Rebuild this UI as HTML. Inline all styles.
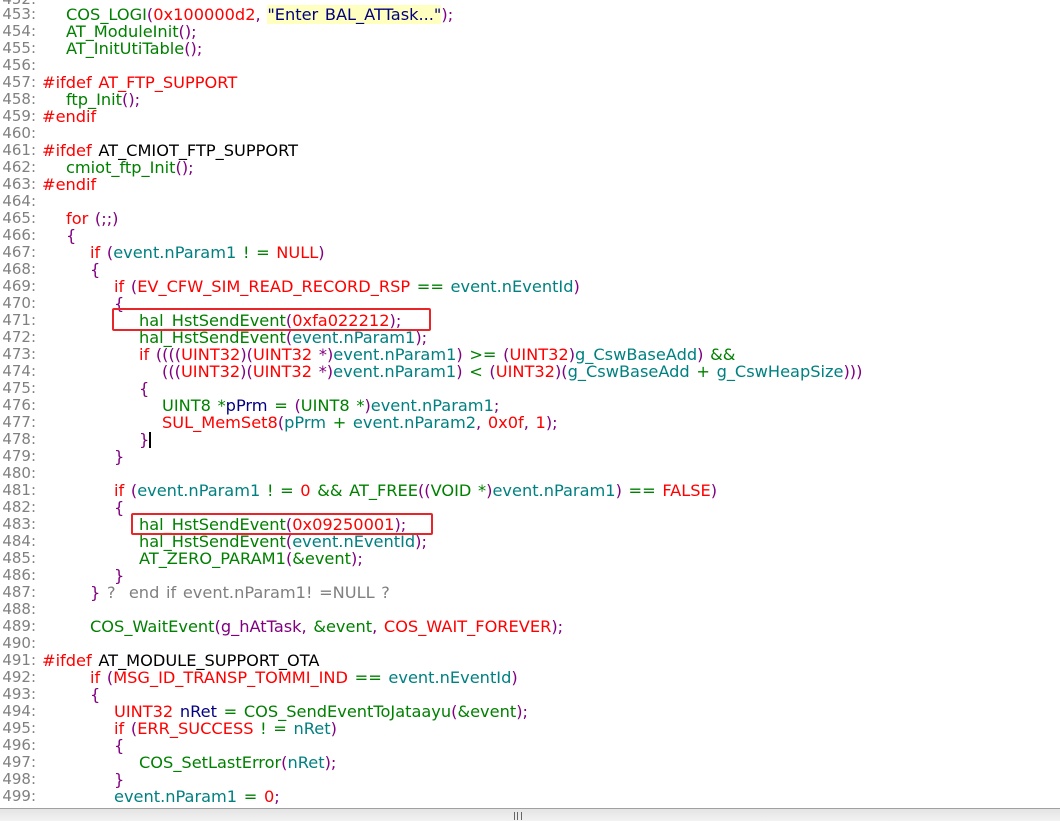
<!DOCTYPE html>
<html><head><meta charset="utf-8"><style>
html,body{margin:0;padding:0;background:#fff;width:1060px;height:820px;overflow:hidden}
.l{position:absolute;left:0;height:17px;line-height:17px;font-family:"DejaVu Sans","Liberation Sans",sans-serif;font-size:16.2px;white-space:pre;color:#008000}
.n{position:absolute;left:0;width:36px;text-align:right;color:#808080;font-size:15px}
.c{position:absolute;left:42px;word-spacing:1.5px}
.g{color:#008000}.r{color:#f00}.p{color:#800080}.t{color:#008080}.b{color:#000080}.s{color:#000080;background:#ffffc0}.x{color:#808080}
.box{position:absolute;border:2px solid #e8262a;border-radius:2px}
</style></head><body>
<div class="l" style="top:-9px"><span class="n">452:</span></div>
<div class="l" style="top:6px"><span class="n">453:</span><span class="c" style="left:66px">COS_LOGI<span class="p">(</span><span class="r">0x100000d2</span><span class="p">,</span> <span class="s">"Enter BAL_ATTask..."</span><span class="p">);</span></span></div>
<div class="l" style="top:23px"><span class="n">454:</span><span class="c" style="left:66px">AT_ModuleInit<span class="p">();</span></span></div>
<div class="l" style="top:40px"><span class="n">455:</span><span class="c" style="left:66px">AT_InitUtiTable<span class="p">();</span></span></div>
<div class="l" style="top:57px"><span class="n">456:</span></div>
<div class="l" style="top:74px"><span class="n">457:</span><span class="c"><span class="r">#ifdef AT_FTP_SUPPORT</span></span></div>
<div class="l" style="top:91px"><span class="n">458:</span><span class="c" style="left:66px">ftp_Init<span class="p">();</span></span></div>
<div class="l" style="top:108px"><span class="n">459:</span><span class="c"><span class="r">#endif</span></span></div>
<div class="l" style="top:125px"><span class="n">460:</span></div>
<div class="l" style="top:142px"><span class="n">461:</span><span class="c"><span class="r">#ifdef</span> <span style="color:#000">AT_CMIOT_FTP_SUPPORT</span></span></div>
<div class="l" style="top:159px"><span class="n">462:</span><span class="c" style="left:66px">cmiot_ftp_Init<span class="p">();</span></span></div>
<div class="l" style="top:176px"><span class="n">463:</span><span class="c"><span class="r">#endif</span></span></div>
<div class="l" style="top:193px"><span class="n">464:</span></div>
<div class="l" style="top:210px"><span class="n">465:</span><span class="c" style="left:66px"><span class="r">for</span> <span class="p">(;;)</span></span></div>
<div class="l" style="top:227px"><span class="n">466:</span><span class="c" style="left:66px"><span class="p">{</span></span></div>
<div class="l" style="top:244px"><span class="n">467:</span><span class="c" style="left:90px"><span class="r">if</span> <span class="p">(</span><span class="t">event.nParam1</span> ! = <span class="r">NULL</span><span class="p">)</span></span></div>
<div class="l" style="top:261px"><span class="n">468:</span><span class="c" style="left:90px"><span class="p">{</span></span></div>
<div class="l" style="top:278px"><span class="n">469:</span><span class="c" style="left:114px"><span class="r">if</span> <span class="p">(</span><span class="r">EV_CFW_SIM_READ_RECORD_RSP</span> == <span class="t">event.nEventId</span><span class="p">)</span></span></div>
<div class="l" style="top:295px"><span class="n">470:</span><span class="c" style="left:114px"><span class="p">{</span></span></div>
<div class="l" style="top:312px"><span class="n">471:</span><span class="c" style="left:139px">hal_HstSendEvent<span class="p">(</span><span class="r">0xfa022212</span><span class="p">);</span></span></div>
<div class="l" style="top:329px"><span class="n">472:</span><span class="c" style="left:139px">hal_HstSendEvent<span class="p">(</span><span class="t">event.nParam1</span><span class="p">);</span></span></div>
<div class="l" style="top:346px"><span class="n">473:</span><span class="c" style="left:139px"><span class="r">if</span> <span class="p">((((</span><span class="r">UINT32</span><span class="p">)(</span><span class="r">UINT32</span> <span class="p">*)</span><span class="t">event.nParam1</span><span class="p">)</span> &gt;= <span class="p">(</span><span class="r">UINT32</span><span class="p">)</span><span class="t">g_CswBaseAdd</span><span class="p">)</span> &amp;&amp;</span></div>
<div class="l" style="top:363px"><span class="n">474:</span><span class="c" style="left:162px"><span class="p">(((</span><span class="r">UINT32</span><span class="p">)(</span><span class="r">UINT32</span> <span class="p">*)</span><span class="t">event.nParam1</span><span class="p">)</span> &lt; <span class="p">(</span><span class="r">UINT32</span><span class="p">)(</span><span class="t">g_CswBaseAdd</span> + <span class="t">g_CswHeapSize</span><span class="p">)))</span></span></div>
<div class="l" style="top:380px"><span class="n">475:</span><span class="c" style="left:139px"><span class="p">{</span></span></div>
<div class="l" style="top:397px"><span class="n">476:</span><span class="c" style="left:162px">UINT8 *<span class="b">pPrm</span> = <span class="p">(</span>UINT8 *<span class="p">)</span><span class="t">event.nParam1</span><span class="p">;</span></span></div>
<div class="l" style="top:414px"><span class="n">477:</span><span class="c" style="left:162px"><span class="r">SUL_MemSet8</span><span class="p">(</span><span class="t">pPrm</span> + <span class="t">event.nParam2</span><span class="p">,</span> <span class="r">0x0f</span><span class="p">,</span> <span class="r">1</span><span class="p">);</span></span></div>
<div class="l" style="top:431px"><span class="n">478:</span><span class="c" style="left:139px"><span class="p">}</span><span style="display:inline-block;width:2px;height:16px;background:#000;vertical-align:-3px"></span></span></div>
<div class="l" style="top:448px"><span class="n">479:</span><span class="c" style="left:114px"><span class="p">}</span></span></div>
<div class="l" style="top:465px"><span class="n">480:</span></div>
<div class="l" style="top:482px"><span class="n">481:</span><span class="c" style="left:114px"><span class="r">if</span> <span class="p">(</span><span class="t">event.nParam1</span> ! = <span class="r">0</span> &amp;&amp; AT_FREE<span class="p">((</span>VOID *<span class="p">)</span><span class="t">event.nParam1</span><span class="p">)</span> == <span class="r">FALSE</span><span class="p">)</span></span></div>
<div class="l" style="top:499px"><span class="n">482:</span><span class="c" style="left:114px"><span class="p">{</span></span></div>
<div class="l" style="top:516px"><span class="n">483:</span><span class="c" style="left:139px">hal_HstSendEvent<span class="p">(</span><span class="r">0x09250001</span><span class="p">);</span></span></div>
<div class="l" style="top:533px"><span class="n">484:</span><span class="c" style="left:139px">hal_HstSendEvent<span class="p">(</span><span class="t">event.nEventId</span><span class="p">);</span></span></div>
<div class="l" style="top:550px"><span class="n">485:</span><span class="c" style="left:139px">AT_ZERO_PARAM1<span class="p">(</span>&amp;event<span class="p">);</span></span></div>
<div class="l" style="top:567px"><span class="n">486:</span><span class="c" style="left:114px"><span class="p">}</span></span></div>
<div class="l" style="top:584px"><span class="n">487:</span><span class="c" style="left:90px"><span class="p">}</span> <span class="x">?  end if event.nParam1! =NULL ?</span></span></div>
<div class="l" style="top:601px"><span class="n">488:</span></div>
<div class="l" style="top:618px"><span class="n">489:</span><span class="c" style="left:90px">COS_WaitEvent<span class="p">(g_hAtTask,</span> &amp;event<span class="p">,</span> <span class="r">COS_WAIT_FOREVER</span><span class="p">);</span></span></div>
<div class="l" style="top:635px"><span class="n">490:</span></div>
<div class="l" style="top:652px"><span class="n">491:</span><span class="c"><span class="r">#ifdef</span> <span style="color:#000">AT_MODULE_SUPPORT_OTA</span></span></div>
<div class="l" style="top:669px"><span class="n">492:</span><span class="c" style="left:90px"><span class="r">if</span> <span class="p">(</span><span class="r">MSG_ID_TRANSP_TOMMI_IND</span> == <span class="t">event.nEventId</span><span class="p">)</span></span></div>
<div class="l" style="top:686px"><span class="n">493:</span><span class="c" style="left:90px"><span class="p">{</span></span></div>
<div class="l" style="top:703px"><span class="n">494:</span><span class="c" style="left:114px"><span class="r">UINT32</span> <span class="b">nRet</span> = COS_SendEventToJataayu<span class="p">(</span>&amp;event<span class="p">);</span></span></div>
<div class="l" style="top:720px"><span class="n">495:</span><span class="c" style="left:114px"><span class="r">if</span> <span class="p">(</span><span class="r">ERR_SUCCESS</span> ! = <span class="t">nRet</span><span class="p">)</span></span></div>
<div class="l" style="top:737px"><span class="n">496:</span><span class="c" style="left:114px"><span class="p">{</span></span></div>
<div class="l" style="top:754px"><span class="n">497:</span><span class="c" style="left:139px">COS_SetLastError<span class="p">(</span><span class="t">nRet</span><span class="p">);</span></span></div>
<div class="l" style="top:771px"><span class="n">498:</span><span class="c" style="left:114px"><span class="p">}</span></span></div>
<div class="l" style="top:788px"><span class="n">499:</span><span class="c" style="left:114px"><span class="t">event.nParam1</span> = <span class="r">0</span><span class="p">;</span></span></div>
<div class="box" style="left:112px;top:308px;width:315px;height:19px"></div>
<div class="box" style="left:131px;top:513px;width:298px;height:18px"></div>
<div style="position:absolute;left:0;top:808px;width:1060px;height:12px;background:linear-gradient(#e4e4e4,#f2f2f2);border-top:1px solid #a0a0a0"></div>
<div style="position:absolute;left:514px;top:812px;width:6px;height:8px;border-left:1px solid #666;border-right:1px solid #666"></div>
<div style="position:absolute;left:517px;top:812px;width:1px;height:8px;background:#666"></div>
</body></html>
